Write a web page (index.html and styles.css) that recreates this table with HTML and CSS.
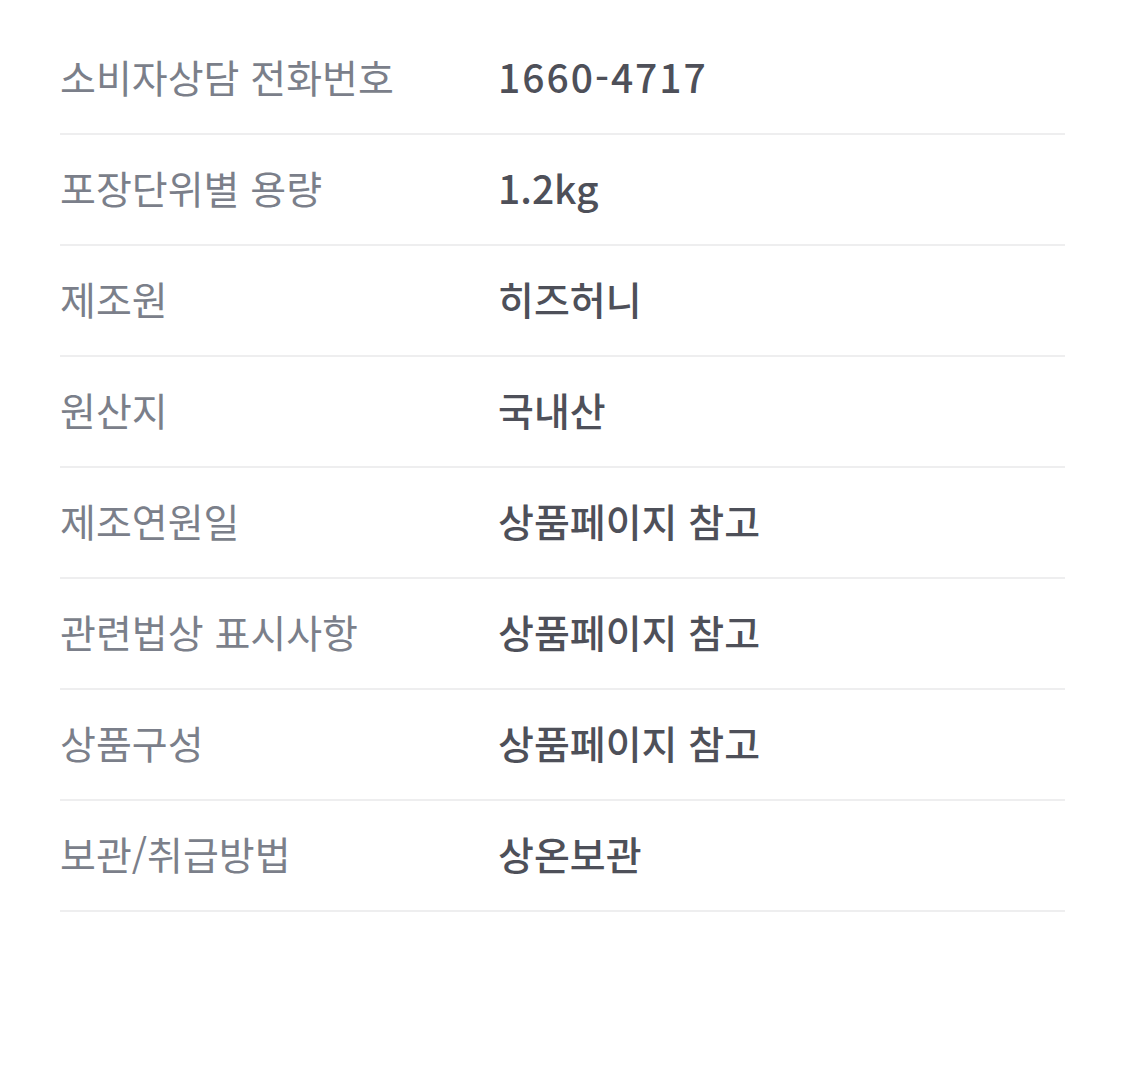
FILE: index.html
```html
<!DOCTYPE html>
<html lang="ko">
<head>
<meta charset="utf-8">
<link rel="stylesheet" href="styles.css">
</head>
<body>
<dl class="info">
  <div class="row"><dt>소비자상담 전화번호</dt><dd class="num">1660-4717</dd></div>
  <div class="row"><dt>포장단위별 용량</dt><dd>1.2kg</dd></div>
  <div class="row"><dt>제조원</dt><dd>히즈허니</dd></div>
  <div class="row"><dt>원산지</dt><dd>국내산</dd></div>
  <div class="row"><dt>제조연원일</dt><dd>상품페이지 참고</dd></div>
  <div class="row"><dt>관련법상 표시사항</dt><dd>상품페이지 참고</dd></div>
  <div class="row"><dt>상품구성</dt><dd>상품페이지 참고</dd></div>
  <div class="row"><dt>보관/취급방법</dt><dd>상온보관</dd></div>
</dl>
</body>
</html>
```
FILE: styles.css
```css
html, body {
  margin: 0;
  padding: 0;
  background: #ffffff;
}
body {
  font-family: "Noto Sans CJK KR", "Noto Sans", sans-serif;
}
.info {
  margin: 0;
  padding: 24px 60px 0 60px;
}
.row {
  box-sizing: border-box;
  display: flex;
  align-items: center;
  height: 111px;
  padding-bottom: 6px;
  border-bottom: 2px solid #eeeeef;
}
.row dt {
  width: 438px;
  flex: none;
  font-size: 39px;
  color: #7b7f8a;
  font-weight: 400;
}
.row dd {
  margin: 0;
  font-size: 39px;
  color: #4e5059;
  font-weight: 500;
}
.row dd.num {
  letter-spacing: 2px;
}
```
